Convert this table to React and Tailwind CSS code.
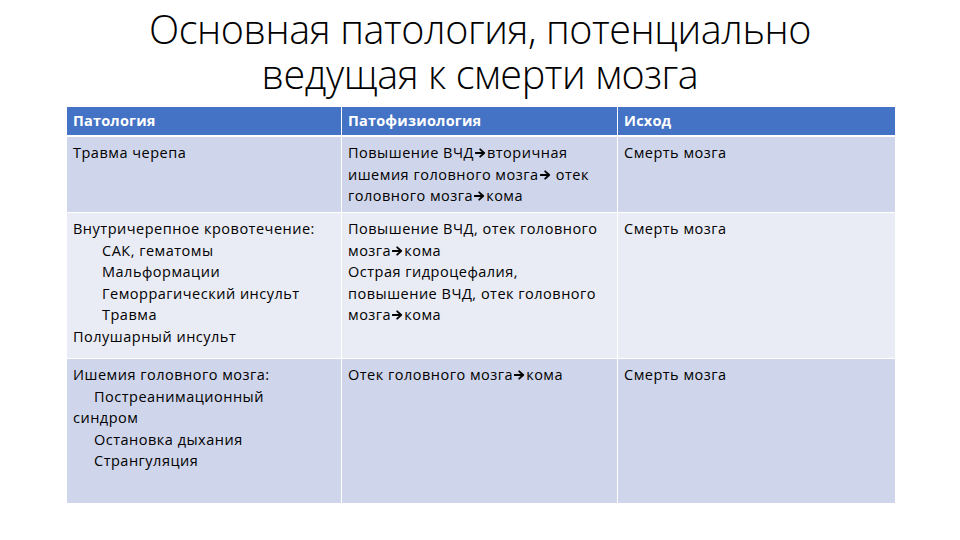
import React from "react";

const Arrow = () => (
  <svg width="11" height="10" viewBox="0 0 11 10" className="inline-block mx-[1px]" style={{ verticalAlign: "0px" }}>
    <path d="M0.5 5 H8.5 M5.2 1.3 L9.2 5 L5.2 8.7" stroke="#000" strokeWidth="1.8" fill="none" strokeLinecap="round" strokeLinejoin="round" />
  </svg>
);

export default function App() {
  const font = { fontFamily: '"Open Sans", "Noto Sans", sans-serif' };
  return (
    <div className="w-[960px] h-[540px] bg-white overflow-hidden" style={font}>
      <div className="pt-[7px] h-[107px]">
        <h1 className="text-center text-[39.5px] leading-[45px] font-light text-black tracking-[-0.4px]">
          Основная патология, потенциально
          <br />
          ведущая к смерти мозга
        </h1>
      </div>
      <div className="ml-[67px] w-[828px] text-[14.5px] leading-[21.5px] tracking-[0.5px] text-black">
        <div className="grid grid-cols-[275px_276px_277px] h-[28px] bg-[#4472c4] text-white font-bold tracking-[0.2px]">
          <div className="pl-[6px] pt-[3px] border-r border-white">Патология</div>
          <div className="pl-[6px] pt-[3px] border-r border-white">Патофизиология</div>
          <div className="pl-[6px] pt-[3px]">Исход</div>
        </div>
        <div className="grid grid-cols-[275px_276px_277px] h-[77px] bg-[#cfd5ea] border-t-2 border-white">
          <div className="pl-[6px] pt-[5px] border-r border-white">Травма черепа</div>
          <div className="pl-[6px] pt-[5px] border-r border-white whitespace-nowrap">
            Повышение ВЧД<Arrow />вторичная<br />
            ишемия головного мозга<Arrow /> отек<br />
            головного мозга<Arrow />кома
          </div>
          <div className="pl-[6px] pt-[5px]">Смерть мозга</div>
        </div>
        <div className="grid grid-cols-[275px_276px_277px] h-[146px] bg-[#e9ebf5] border-t border-white">
          <div className="pl-[6px] pt-[5px] border-r border-white whitespace-nowrap">
            <div>Внутричерепное кровотечение:</div>
            <div className="pl-[29px]">САК, гематомы</div>
            <div className="pl-[29px]">Мальформации</div>
            <div className="pl-[29px]">Геморрагический инсульт</div>
            <div className="pl-[29px]">Травма</div>
            <div>Полушарный инсульт</div>
          </div>
          <div className="pl-[6px] pt-[5px] border-r border-white whitespace-nowrap">
            Повышение ВЧД, отек головного<br />
            мозга<Arrow />кома<br />
            Острая гидроцефалия,<br />
            повышение ВЧД, отек головного<br />
            мозга<Arrow />кома
          </div>
          <div className="pl-[6px] pt-[5px]">Смерть мозга</div>
        </div>
        <div className="grid grid-cols-[275px_276px_277px] h-[145px] bg-[#cfd5ea] border-t border-white">
          <div className="pl-[6px] pt-[5px] border-r border-white whitespace-nowrap">
            <div>Ишемия головного мозга:</div>
            <div className="pl-[21px]">Постреанимационный</div>
            <div>синдром</div>
            <div className="pl-[21px]">Остановка дыхания</div>
            <div className="pl-[21px]">Странгуляция</div>
          </div>
          <div className="pl-[6px] pt-[5px] border-r border-white whitespace-nowrap">
            Отек головного мозга<Arrow />кома
          </div>
          <div className="pl-[6px] pt-[5px]">Смерть мозга</div>
        </div>
      </div>
    </div>
  );
}
